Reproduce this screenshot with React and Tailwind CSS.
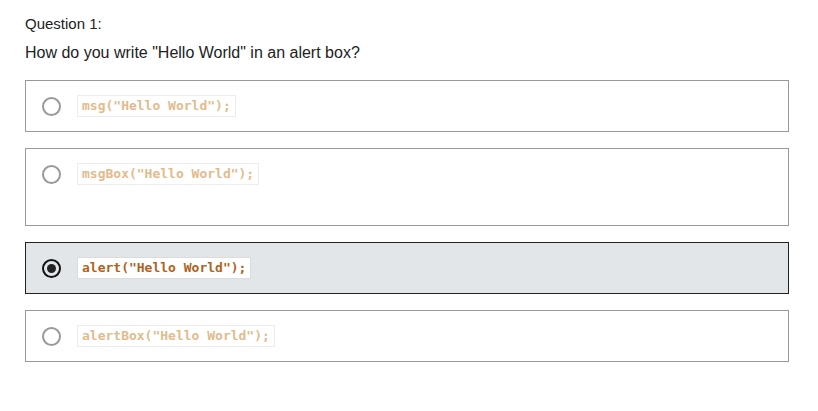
import React, { useState } from 'react';

const options = [
  { id: 1, code: 'msg("Hello World");', tall: false },
  { id: 2, code: 'msgBox("Hello World");', tall: true },
  { id: 3, code: 'alert("Hello World");', tall: false },
  { id: 4, code: 'alertBox("Hello World");', tall: false },
];

function Radio({ checked }) {
  if (checked) {
    return (
      <span className="flex h-[19px] w-[19px] shrink-0 items-center justify-center rounded-full border-[2.5px] border-[#111]">
        <span className="h-[9px] w-[9px] rounded-full bg-[#222]" />
      </span>
    );
  }
  return <span className="block h-[19px] w-[19px] shrink-0 rounded-full border-2 border-[#999]" />;
}

export default function App() {
  const [selected, setSelected] = useState(3);

  return (
    <div className="min-h-screen bg-white pl-[25px] pt-[14px] font-['Liberation_Sans',Arial,sans-serif] leading-[20px] text-[#222]">
      <p className="text-[15px]">Question 1:</p>
      <p className="mt-[9px] text-[16px]">How do you write "Hello World" in an alert box?</p>

      <div className="mt-[17px] flex w-[764px] flex-col gap-[16px]">
        {options.map((opt) => {
          const isSel = opt.id === selected;
          return (
            <div
              key={opt.id}
              onClick={() => setSelected(opt.id)}
              className={`flex cursor-pointer items-start gap-[16px] border px-[16px] py-[14px] ${opt.tall ? 'h-[78px]' : 'h-[52px]'} ${
                isSel ? 'border-[#222] bg-[#e3e6e9]' : 'border-[#999] bg-white'
              }`}
            >
              <div className="flex h-[22px] items-center">
                <Radio checked={isSel} />
              </div>
              <code
                className={`block h-[22px] border bg-white px-[4px] font-['DejaVu_Sans_Mono','Liberation_Mono',monospace] text-[13px] font-bold leading-[20px] ${
                  isSel ? 'border-[#dcdcdc] text-[#b0621c]' : 'border-[#ececec] text-[#e2bb8d]'
                }`}
              >
                {opt.code}
              </code>
            </div>
          );
        })}
      </div>
    </div>
  );
}
